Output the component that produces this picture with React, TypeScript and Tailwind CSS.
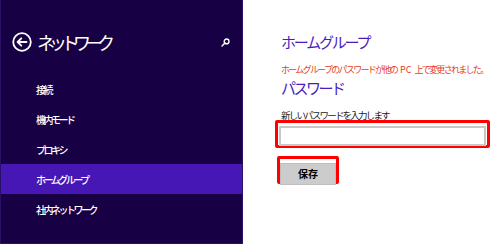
import React from 'react';

const menuItems = ['接続', '機内モード', 'プロキシ', 'ホームグループ', '社内ネットワーク'];

const BackIcon: React.FC = () => (
  <svg width="20" height="20" viewBox="0 0 20 20" fill="none" stroke="white" strokeWidth="1.8">
    <circle cx="10" cy="10" r="8.8" />
    <path d="M14.5 10H5.8M9.3 6.3L5.6 10l3.7 3.7" strokeLinecap="round" strokeLinejoin="round" />
  </svg>
);

const SearchIcon: React.FC = () => (
  <svg width="9" height="9" viewBox="0 0 9 9" fill="none" stroke="white" strokeWidth="1.4">
    <circle cx="5.6" cy="3.4" r="2.4" />
    <path d="M3.9 5.1L1 8" strokeLinecap="round" />
  </svg>
);

const App: React.FC = () => {
  return (
    <div
      className="flex w-[500px] h-[244px] bg-white overflow-hidden"
      style={{ fontFamily: '"Noto Sans CJK JP", "Noto Sans", sans-serif' }}
    >
      {/* settings side panel */}
      <div className="w-[243px] h-[244px] shrink-0 bg-[#170043] border-r border-b border-l border-[#2a0f66] flex flex-col">
        <div className="flex items-center h-[28px] mt-[28px] pl-[11px] pr-[12px]">
          <BackIcon />
          <span className="ml-[5px] text-[18px] leading-[28px] text-white tracking-[-6px]">ネットワーク</span>
          <div className="ml-auto mt-[1px]">
            <SearchIcon />
          </div>
        </div>
        <div className="flex flex-col mt-[18px]">
          {menuItems.map((item) => (
            <div
              key={item}
              className={`h-[30px] flex items-center pl-[35px] text-[10px] font-medium text-white tracking-[-2.5px] ${
                item === 'ホームグループ' ? 'bg-[#4617b4]' : ''
              }`}
            >
              {item}
            </div>
          ))}
        </div>
      </div>

      {/* content */}
      <div className="flex-1 flex flex-col pl-[32px] pt-[33px]">
        <h1 className="ml-[6px] text-[15px] leading-[18px] text-[#4a1cbe] tracking-[-2.2px]">ホームグループ</h1>
        <p className="ml-[6px] mt-[13px] text-[9px] leading-[12px] text-[#e5401b] tracking-[-1.7px] whitespace-nowrap">
          ホームグループのパスワードが他の<span className="mx-[3px] tracking-normal">PC</span>上で変更されました。
        </p>
        <h2 className="ml-[6px] mt-[3px] text-[15px] leading-[18px] text-[#4a1cbe] tracking-[-2.5px]">パスワード</h2>
        <label className="ml-[6px] mt-[13px] text-[9.5px] leading-[10px] text-[#222] tracking-[-1.8px]">
          新しいパスワードを入力します
        </label>
        <div className="w-[215px] h-[28px] border-[3px] border-[#ff0000] rounded-[2px] p-[1px]">
          <input className="w-full h-full border-2 border-[#c8c8c8] bg-white outline-none" />
        </div>
        <div className="mt-[8px] ml-[2px] w-[62px] h-[28px] border-[3px] border-[#ff0000] rounded-[2px]">
          <button className="w-full h-full bg-[#cccccc] border border-[#bdbdbd] text-[10px] font-bold text-black">
            保存
          </button>
        </div>
      </div>
    </div>
  );
};

export default App;
